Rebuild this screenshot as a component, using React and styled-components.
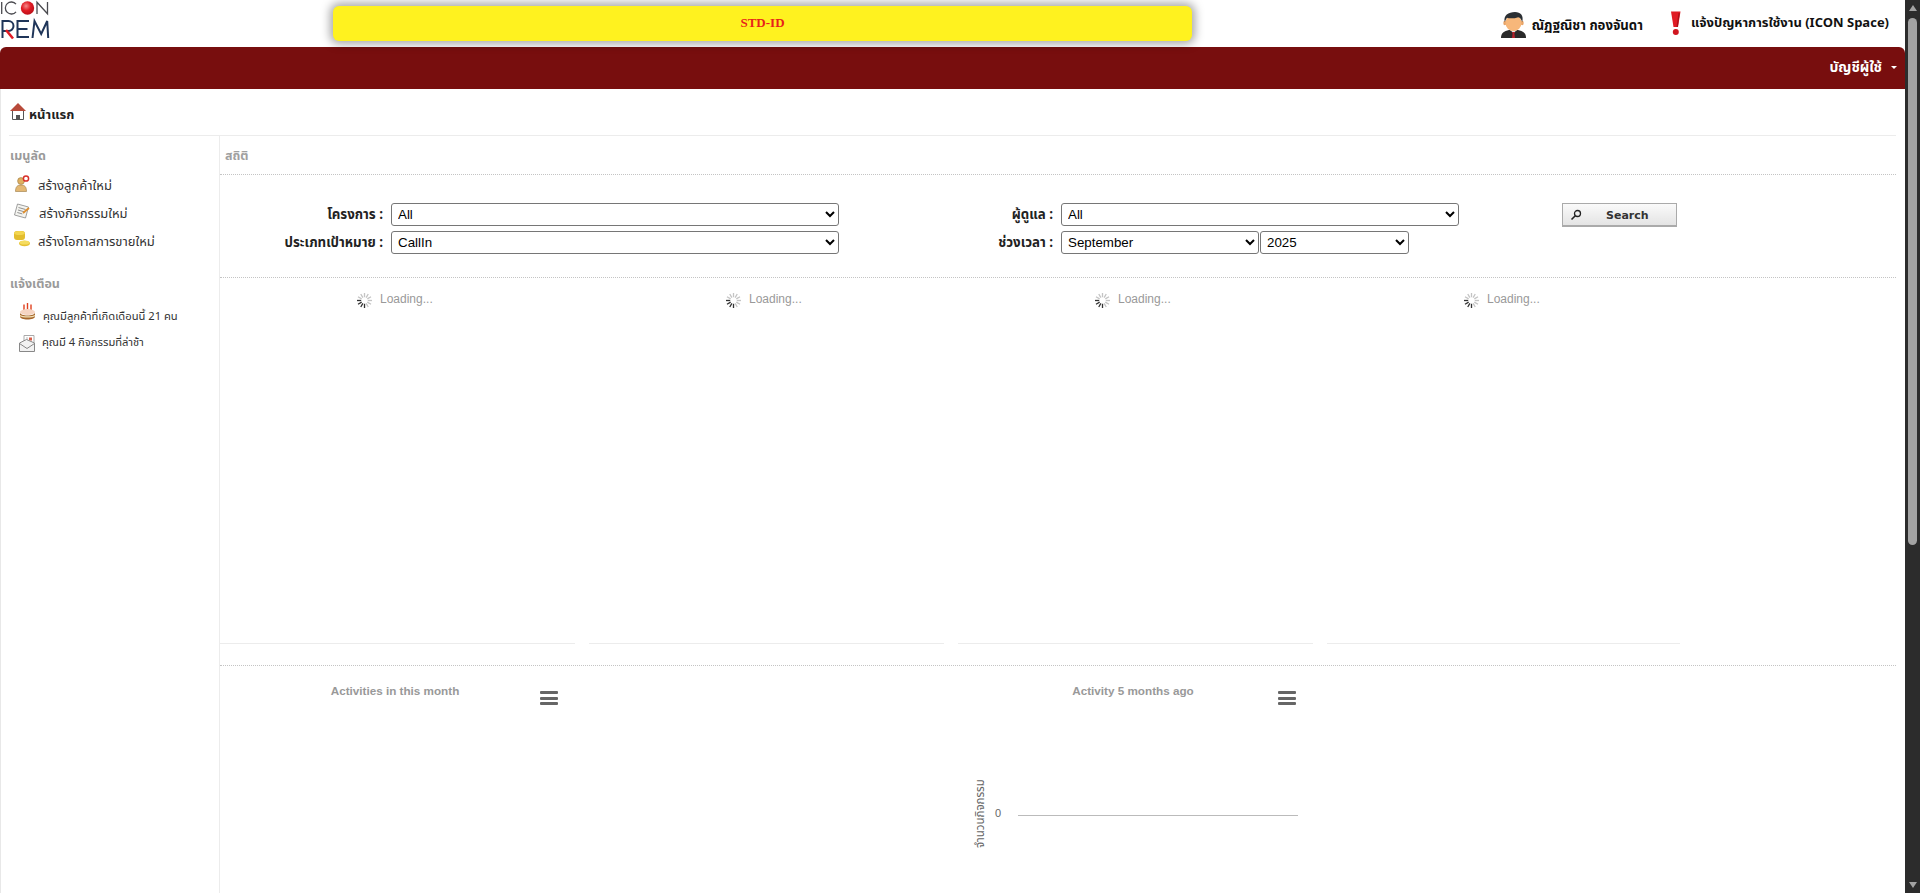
import React from "react"
import styled, { createGlobalStyle } from "styled-components"

const THAI = `Tahoma, "Noto Sans Thai", "Noto Sans", "DejaVu Sans", sans-serif`

const GlobalStyle = createGlobalStyle`
  html, body {
    margin: 0;
    padding: 0;
    height: 893px;
    overflow: hidden;
    background: #fff;
  }
  * { box-sizing: border-box; }
`

const Screen = styled.div`
  display: flex;
  width: 1920px;
  height: 893px;
  overflow: hidden;
  font-family: ${THAI};
`

const Page = styled.div`
  width: 1905px;
  height: 893px;
  overflow: hidden;
`

const Scrollbar = styled.div`
  width: 15px;
  height: 893px;
  background: #2c2c2c;
  display: flex;
  flex-direction: column;
  align-items: center;
  padding-top: 5px;
`

const ArrowUp = styled.div`
  width: 0;
  height: 0;
  border-left: 4px solid transparent;
  border-right: 4px solid transparent;
  border-bottom: 6px solid #a3a3a3;
`

const ArrowDown = styled.div`
  width: 0;
  height: 0;
  border-left: 4px solid transparent;
  border-right: 4px solid transparent;
  border-top: 6px solid #a3a3a3;
`

const Thumb = styled.div`
  width: 9px;
  height: 527px;
  margin-top: 7px;
  margin-bottom: 337px;
  border-radius: 5px;
  background: #a3a3a3;
`

const TopBar = styled.div`
  height: 47px;
  display: flex;
  align-items: flex-start;
  padding-right: 16px;
`

const LogoBox = styled.div`
  width: 333px;
  flex: none;
  height: 40px;
`

const Banner = styled.div`
  width: 859px;
  height: 35px;
  margin-top: 6px;
  padding-bottom: 2px;
  flex: none;
  background: #fff21f;
  border-radius: 6px;
  box-shadow: 0 0 10px 3px rgba(0, 0, 0, 0.35);
  color: #e8231a;
  font: bold 13px "Liberation Serif", serif;
  display: flex;
  align-items: center;
  justify-content: center;
`

const UserLink = styled.div`
  margin-left: auto;
  display: flex;
  align-items: center;
  gap: 6px;
  margin-top: 10px;
  font-size: 13.2px;
  font-weight: bold;
  color: #111;
`

const ProblemLink = styled(UserLink)`
  margin-left: 27px;
  font-size: 13px;
  gap: 9px;
`

const LinkText = styled.span`
  line-height: 26px;
  padding-top: ${p => p.$drop || 0}px;
`

const MenuBar = styled.div`
  height: 42px;
  background: #780e0e;
  border-radius: 6px 6px 0 0;
  display: flex;
  align-items: center;
  justify-content: flex-end;
  padding-right: 8px;
  padding-bottom: 1px;
  color: #fff;
  font-size: 14px;
  font-weight: bold;
`

const Caret = styled.span`
  width: 0;
  height: 0;
  margin-left: 9px;
  border-left: 3px solid transparent;
  border-right: 3px solid transparent;
  border-top: 3px solid #fff;
`

const Body = styled.div`
  border-left: 1px solid #e8e8e8;
  padding-left: 8px;
  padding-right: 9px;
`

const Crumb = styled.div`
  height: 47px;
  display: flex;
  align-items: center;
  gap: 3px;
  padding-left: 1px;
  border-bottom: 1px solid #ececec;
  font-size: 13px;
  font-weight: bold;
  color: #222;

  svg {
    margin-top: -2px;
  }
`

const CrumbText = styled.span`
  margin-top: 6px;
`

const Columns = styled.div`
  display: flex;
  height: 758px;
`

const Side = styled.div`
  width: 211px;
  flex: none;
  border-right: 1px solid #ececec;
  padding-top: 12px;
`

const SideHeading = styled.div`
  padding-left: 1px;
  font-size: 12.5px;
  font-weight: bold;
  line-height: 18px;
  color: #9a9a9a;
  margin-top: ${p => p.$top || 0}px;
  margin-bottom: ${p => p.$gap}px;
`

const ShortcutRow = styled.div`
  display: flex;
  height: 28px;
  padding-left: 5px;
  gap: 8px;
  align-items: flex-start;
  font-size: 13px;
  color: #333;
`

const ShortcutText = styled.span`
  line-height: 16px;
  padding-top: 3px;
`

const AlertRow = styled.div`
  display: flex;
  height: 28px;
  padding-left: 10px;
  gap: 7px;
  align-items: flex-start;
  font-size: 11.2px;
  color: #333;

  svg {
    margin-top: ${p => p.$iconTop}px;
  }
`

const AlertText = styled.span`
  line-height: 14px;
  padding-top: ${p => p.$top}px;
`

const Main = styled.div`
  flex: 1;
`

const MainHead = styled.div`
  height: 39px;
  padding-left: 5px;
  padding-top: 13px;
  border-bottom: 1px dotted #c4c4c4;
  font-size: 12.5px;
  font-weight: bold;
  line-height: 16px;
  color: #a0a0a0;
`

const Filters = styled.div`
  height: 103px;
  padding-top: 28px;
  border-bottom: 1px dotted #c4c4c4;
  display: grid;
  grid-template-columns: 163px 448px 206px 398px 87px 115px;
  grid-template-rows: 23px 23px;
  row-gap: 5px;
  column-gap: 8px;
  align-items: center;
`

const Label = styled.label`
  text-align: right;
  font-size: 13.3px;
  font-weight: bold;
  color: #222;
  white-space: nowrap;
`

const Select = styled.select`
  height: 23px;
  width: ${p => p.$w || "100%"};
  border: 1px solid #767676;
  border-radius: 3px;
  background-color: #fff;
  padding-left: 2px;
  font: 13.33px "Liberation Sans", Arial, sans-serif;
  color: #000;
`

const PeriodCell = styled.div`
  display: flex;
  gap: 1px;
`

const SearchButton = styled.button`
  grid-row: 1;
  grid-column: 6;
  width: 115px;
  height: 24px;
  border: 1px solid #aaa;
  border-bottom: 2px solid #aaa;
  background: linear-gradient(#fafafa, #e4e4e4);
  padding: 2px 0 0 7px;
  display: flex;
  align-items: center;
  font: bold 11px Tahoma, "DejaVu Sans", sans-serif;
  color: #333;
`

const SearchLabel = styled.span`
  margin-left: 24px;
`

const StatsRow = styled.div`
  display: grid;
  grid-template-columns: 355px 355px 355px 353px;
  column-gap: 14px;
  height: 366px;
`

const StatBox = styled.div`
  height: 366px;
  border-bottom: 1px solid #ececec;
  padding-left: 137px;
  padding-top: 15px;
  display: flex;
  align-items: flex-start;
  gap: 8px;
  font: 12px "Liberation Sans", Arial, sans-serif;
  line-height: 16px;
  color: #999;
`

const LoadingText = styled.span`
  margin-top: -2px;
`

const ChartsRow = styled.div`
  margin-top: 21px;
  border-top: 1px dotted #c4c4c4;
  display: grid;
  grid-template-columns: 738px 350px;
`

const Chart = styled.div`
  width: 350px;
  height: 228px;
  position: relative;
`

const ChartTitle = styled.div`
  text-align: center;
  padding-top: 17px;
  font: bold 11.7px "Liberation Sans", Arial, sans-serif;
  line-height: 16px;
  color: #999;
`

const ChartMenu = styled.div`
  position: absolute;
  left: 320px;
  top: 25px;
  width: 18px;
  height: 14px;
  display: flex;
  flex-direction: column;
  justify-content: space-between;
`

const MenuLine = styled.div`
  height: 3px;
  border-radius: 1px;
  background: #666;
`

const YTitle = styled.div`
  position: absolute;
  left: 16px;
  top: 112px;
  height: 72px;
  writing-mode: vertical-rl;
  transform: rotate(180deg);
  text-align: center;
  font-size: 11.5px;
  line-height: 14px;
  color: #666;
  white-space: nowrap;
`

const YTick = styled.div`
  position: absolute;
  left: 37px;
  top: 141px;
  font: 11px "Liberation Sans", Arial, sans-serif;
  color: #666;
`

const ZeroLine = styled.div`
  position: absolute;
  left: 60px;
  top: 149px;
  width: 280px;
  height: 1px;
  background: #bbb;
`

const LogoMark = () => (
  <svg width="50" height="40" viewBox="0 0 50 40">
    <defs>
      <radialGradient id="ball" cx="0.4" cy="0.35" r="0.7">
        <stop offset="0" stopColor="#f58a8a" />
        <stop offset="0.5" stopColor="#e01b24" />
        <stop offset="1" stopColor="#b80f18" />
      </radialGradient>
    </defs>
    <g fill="none" stroke="#4a4a4f" strokeWidth="1.3">
      <path d="M1.7 2v12" />
      <path d="M16 4.200a6 6 0 1 0 0 7.600" />
      <path d="M37 14V2.200l10.500 11.600V2" />
    </g>
    <circle cx="27.500" cy="8" r="6.700" fill="url(#ball)" />
    <g fill="none" stroke="#1f3559" strokeWidth="2">
      <path d="M2.500 38V21h6a5 5 0 0 1 0 10H3" />
      <path d="M29 21H17.500v16H29M17.500 29h10" />
      <path d="M32.500 38l2-17 6.700 13 6-13 1 17" />
    </g>
    <path d="M6 30l7 8.500" stroke="#e01b24" strokeWidth="2.600" fill="none" />
  </svg>
)

const PersonIcon = () => (
  <svg width="25" height="26" viewBox="0 0 25 26">
    <path d="M0 26c0-5 3-7 8-8h9c5 1 8 3 8 8z" fill="#2a2a2a" />
    <path d="M9 18h7l-3.500 3z" fill="#e8e8e8" />
    <path d="M11 20h3l-.6 1.500.6 4.500h-3l.6-4.500z" fill="#b3202a" />
    <ellipse cx="3.800" cy="11" rx="1.500" ry="2.200" fill="#e8a468" />
    <ellipse cx="21.200" cy="11" rx="1.500" ry="2.200" fill="#e8a468" />
    <ellipse cx="12.500" cy="11" rx="8" ry="8" fill="#f7b77a" />
    <path d="M3.800 10C2 3.500 7.500 0 14 0c5.500 0 9 3.500 7.200 10-.9-2.800-2-4.200-4-4.800C13 6.800 8 6.500 6 5.800 5 7 4.500 8.500 3.800 10z" fill="#2b2f33" />
  </svg>
)

const AlertIcon = () => (
  <svg width="12" height="26" viewBox="0 0 12 26">
    <path d="M1 1.500h9.500L8 17H3.500z" fill="#e01b24" />
    <circle cx="5.800" cy="22" r="3" fill="#d0161f" />
    <path d="M8.500 3l-2 14h1.300l2-14z" fill="#a8101a" />
  </svg>
)

const HomeIcon = () => (
  <svg width="16" height="17" viewBox="0 0 16 17">
    <path d="M2.500 7v9.500h11V7z" fill="#fff" stroke="#555" />
    <path d="M6 16.500v-4.500h4v4.500z" fill="#555" />
    <path d="M8 0L0 8h16z" fill="#b84a3a" />
  </svg>
)

const AddUserIcon = () => (
  <svg width="16" height="17" viewBox="0 0 16 17">
    <circle cx="7" cy="6" r="3.400" fill="#e0b060" stroke="#9a7b45" strokeWidth=".6" />
    <path d="M1.500 16.500c0-5 2-6.500 5.500-6.500s5.500 1.500 5.500 6.500z" fill="#e4b873" stroke="#9a7b45" strokeWidth=".6" />
    <circle cx="12" cy="3.500" r="2.600" fill="#fff" stroke="#d8302a" strokeWidth="1.500" />
  </svg>
)

const NoteIcon = () => (
  <svg width="17" height="16" viewBox="0 0 17 16">
    <path d="M3.500 1l11 3-3 11-11-3z" fill="#f4f4f0" stroke="#888" strokeWidth=".8" />
    <path d="M4.500 4.500l7 2M4 7l7 2M3.300 9.500l5 1.400" stroke="#777" strokeWidth=".8" />
    <path d="M9 10l6-5" stroke="#e09030" strokeWidth="1.800" />
  </svg>
)

const CoinsIcon = () => (
  <svg width="16" height="16" viewBox="0 0 16 16">
    <rect x="0" y="0" width="11" height="9" rx="3" fill="#e3bd2e" />
    <ellipse cx="5.500" cy="2" rx="5.500" ry="2" fill="#f3d651" />
    <ellipse cx="10.500" cy="12.500" rx="5.500" ry="2.700" fill="#e6c234" />
    <ellipse cx="10.500" cy="11.500" rx="5" ry="2" fill="#f5dc60" />
  </svg>
)

const CakeIcon = () => (
  <svg width="17" height="17" viewBox="0 0 17 17">
    <path d="M5 1.500v6M8.500 0v7M12 1.500v6" stroke="#e0401f" strokeWidth="1.400" />
    <ellipse cx="8.500" cy="9" rx="7.500" ry="3" fill="#f6d5c2" />
    <path d="M1 9.500v4c0 2 3.500 3 7.500 3s7.500-1 7.500-3v-4c0 2-3.500 3-7.500 3S1 11.500 1 9.500z" fill="#a8682c" />
    <path d="M1 12c2 1.700 13 1.700 15 0v1.200c-2 1.700-13 1.700-15 0z" fill="#f3e2b8" />
  </svg>
)

const MailIcon = () => (
  <svg width="16" height="17" viewBox="0 0 16 17">
    <path d="M5 .5h10v11H5z" fill="#fff" stroke="#aaa" />
    <rect x="10" y="2.500" width="3" height="3" fill="#d8604a" />
    <path d="M7 3h2M7 5h2M7 7h6" stroke="#bbb" />
    <path d="M.5 8l7-3.500L15.500 8v8.500H.5z" fill="#f2f2f2" stroke="#888" />
    <path d="M.5 8.500l7.500 5 7.500-5" fill="none" stroke="#888" />
  </svg>
)

const Spinner = () => (
  <svg width="15" height="15" viewBox="0 0 16 16">
    {[...Array(12)].map((_, i) => (
      <rect
        key={i}
        x="7.300"
        y="0"
        width="1.400"
        height="4.500"
        fill={i >= 6 && i <= 9 ? "#333" : "#c4c4c4"}
        transform={`rotate(${i * 30} 8 8)`}
      />
    ))}
  </svg>
)

const SearchIcon = () => (
  <svg width="12" height="12" viewBox="0 0 12 12">
    <circle cx="7.500" cy="4.500" r="3" fill="none" stroke="#222" strokeWidth="1.300" />
    <path d="M5.300 6.700L1.500 10.500" stroke="#222" strokeWidth="1.600" />
  </svg>
)

const stats = [0, 1, 2, 3]

const App = () => {
  return (
    <Screen>
      <GlobalStyle />
      <Page>
        <TopBar>
          <LogoBox>
            <LogoMark />
          </LogoBox>
          <Banner>STD-ID</Banner>
          <UserLink>
            <PersonIcon />
            <LinkText $drop={3}>ณัฏฐณิชา กองจันดา</LinkText>
          </UserLink>
          <ProblemLink>
            <AlertIcon />
            <LinkText>แจ้งปัญหาการใช้งาน (ICON Space)</LinkText>
          </ProblemLink>
        </TopBar>
        <MenuBar>
          บัญชีผู้ใช้
          <Caret />
        </MenuBar>
        <Body>
          <Crumb>
            <HomeIcon />
            <CrumbText>หน้าแรก</CrumbText>
          </Crumb>
          <Columns>
            <Side>
              <SideHeading $gap={9}>เมนูลัด</SideHeading>
              <ShortcutRow>
                <AddUserIcon />
                <ShortcutText>สร้างลูกค้าใหม่</ShortcutText>
              </ShortcutRow>
              <ShortcutRow>
                <NoteIcon />
                <ShortcutText>สร้างกิจกรรมใหม่</ShortcutText>
              </ShortcutRow>
              <ShortcutRow>
                <CoinsIcon />
                <ShortcutText>สร้างโอกาสการขายใหม่</ShortcutText>
              </ShortcutRow>
              <SideHeading $top={17} $gap={9}>แจ้งเตือน</SideHeading>
              <AlertRow $iconTop={0}>
                <CakeIcon />
                <AlertText $top={7}>คุณมีลูกค้าที่เกิดเดือนนี้ 21 คน</AlertText>
              </AlertRow>
              <AlertRow $iconTop={4}>
                <MailIcon />
                <AlertText $top={5}>คุณมี 4 กิจกรรมที่ล่าช้า</AlertText>
              </AlertRow>
            </Side>
            <Main>
              <MainHead>สถิติ</MainHead>
              <Filters>
                <Label>โครงการ :</Label>
                <Select defaultValue="All">
                  <option>All</option>
                </Select>
                <Label>ผู้ดูแล :</Label>
                <Select defaultValue="All">
                  <option>All</option>
                </Select>
                <div />
                <SearchButton>
                  <SearchIcon />
                  <SearchLabel>Search</SearchLabel>
                </SearchButton>
                <Label>ประเภทเป้าหมาย :</Label>
                <Select defaultValue="CallIn">
                  <option>CallIn</option>
                </Select>
                <Label>ช่วงเวลา :</Label>
                <PeriodCell>
                  <Select $w="198px" defaultValue="September">
                    <option>September</option>
                  </Select>
                  <Select $w="149px" defaultValue="2025">
                    <option>2025</option>
                  </Select>
                </PeriodCell>
              </Filters>
              <StatsRow>
                {stats.map(n => (
                  <StatBox key={n}>
                    <Spinner />
                    <LoadingText>Loading...</LoadingText>
                  </StatBox>
                ))}
              </StatsRow>
              <ChartsRow>
                <Chart>
                  <ChartTitle>Activities in this month</ChartTitle>
                  <ChartMenu>
                    <MenuLine />
                    <MenuLine />
                    <MenuLine />
                  </ChartMenu>
                </Chart>
                <Chart>
                  <ChartTitle>Activity 5 months ago</ChartTitle>
                  <ChartMenu>
                    <MenuLine />
                    <MenuLine />
                    <MenuLine />
                  </ChartMenu>
                  <YTitle>จำนวนกิจกรรม</YTitle>
                  <YTick>0</YTick>
                  <ZeroLine />
                </Chart>
              </ChartsRow>
            </Main>
          </Columns>
        </Body>
      </Page>
      <Scrollbar>
        <ArrowUp />
        <Thumb />
        <ArrowDown />
      </Scrollbar>
    </Screen>
  )
}

export default App
